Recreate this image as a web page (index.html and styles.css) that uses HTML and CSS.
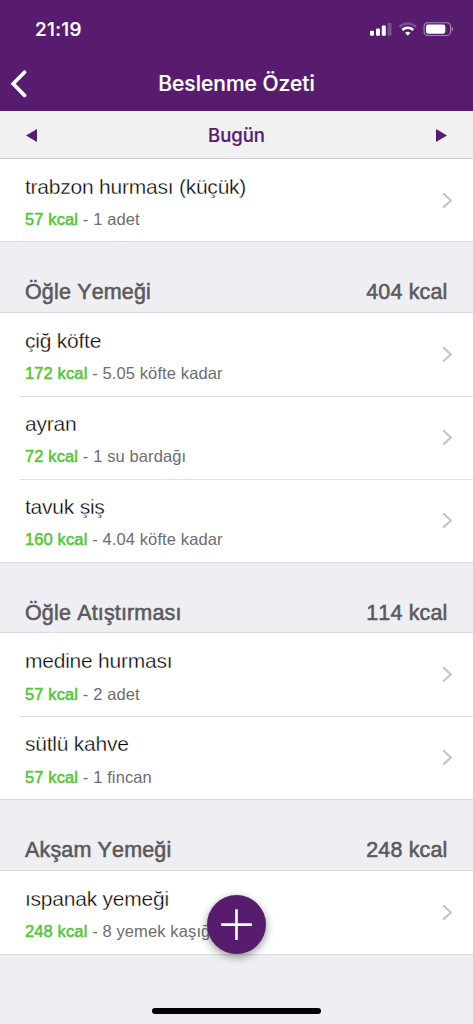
FILE: index.html
```
<!DOCTYPE html>
<html lang="tr">
<head>
<meta charset="utf-8">
<title>Beslenme Özeti</title>
<link rel="stylesheet" href="styles.css">
</head>
<body>
<div class="app">
  <header class="header">
    <div class="status">
      <span class="time">21:19</span>
      <svg class="status-icons" width="86" height="18" viewBox="0 0 86 18" fill="#fff">
        <rect x="0" y="10.8" width="4" height="5" rx="1"/>
        <rect x="6" y="8.4" width="4" height="7.4" rx="1"/>
        <rect x="11.8" y="5.4" width="4" height="10.4" rx="1"/>
        <rect x="17.6" y="3" width="4" height="12.8" rx="1" opacity=".22"/>
        <g fill="none" stroke="#fff" stroke-width="2.5">
          <path d="M29.5 6.9C34.3 2.4 41.3 2.4 46.1 6.9" opacity=".22"/>
          <path d="M32.3 10C35.5 7.1 40.1 7.1 43.3 10"/>
        </g>
        <path d="M37.8 15.7l-2.7-2.9c1.6-1.3 3.8-1.3 5.4 0z"/>
        <rect x="54.1" y="2.7" width="26.4" height="12.8" rx="3.6" fill="none" stroke="#fff" stroke-width="1.1" opacity=".48"/>
        <rect x="56" y="4.5" width="19.3" height="9.3" rx="2"/>
        <path d="M81.7 7c2 .8 2 3.6 0 4.4z" opacity=".5"/>
      </svg>
    </div>
    <div class="nav">
      <svg class="back" width="18" height="30" viewBox="0 0 18 30" fill="none" stroke="#fff" stroke-width="3.7" stroke-linecap="round" stroke-linejoin="miter"><path d="M15.5 3.2 4.2 14.8 15.5 26.4"/></svg>
      <h1 class="title">Beslenme Özeti</h1>
      <span></span>
    </div>
  </header>
  <div class="datebar">
    <svg width="11" height="13" viewBox="0 0 11 13"><path d="M11 0v13L0 6.5z" fill="#581c6e"/></svg>
    <span class="day">Bugün</span>
    <svg width="11" height="13" viewBox="0 0 11 13"><path d="M0 0v13l11-6.5z" fill="#581c6e"/></svg>
  </div>
  <main class="list">
    <div class="rows first">
      <div class="row"><div class="info"><div class="name">trabzon hurması (küçük)</div><div class="detail"><b>57 kcal</b> - 1 adet</div></div><svg class="chev" viewBox="0 0 11 17"><path d="M1.2 1.2 8.8 8.4 1.2 15.6"/></svg></div>
    </div>
    <h2 class="section"><span>Öğle Yemeği</span><span>404 kcal</span></h2>
    <div class="rows">
      <div class="row"><div class="info"><div class="name">çiğ köfte</div><div class="detail"><b>172 kcal</b> - 5.05 köfte kadar</div></div><svg class="chev" viewBox="0 0 11 17"><path d="M1.2 1.2 8.8 8.4 1.2 15.6"/></svg></div>
      <div class="row"><div class="info"><div class="name">ayran</div><div class="detail"><b>72 kcal</b> - 1 su bardağı</div></div><svg class="chev" viewBox="0 0 11 17"><path d="M1.2 1.2 8.8 8.4 1.2 15.6"/></svg></div>
      <div class="row"><div class="info"><div class="name">tavuk şiş</div><div class="detail"><b>160 kcal</b> - 4.04 köfte kadar</div></div><svg class="chev" viewBox="0 0 11 17"><path d="M1.2 1.2 8.8 8.4 1.2 15.6"/></svg></div>
    </div>
    <h2 class="section"><span>Öğle Atıştırması</span><span>114 kcal</span></h2>
    <div class="rows">
      <div class="row"><div class="info"><div class="name">medine hurması</div><div class="detail"><b>57 kcal</b> - 2 adet</div></div><svg class="chev" viewBox="0 0 11 17"><path d="M1.2 1.2 8.8 8.4 1.2 15.6"/></svg></div>
      <div class="row"><div class="info"><div class="name">sütlü kahve</div><div class="detail"><b>57 kcal</b> - 1 fincan</div></div><svg class="chev" viewBox="0 0 11 17"><path d="M1.2 1.2 8.8 8.4 1.2 15.6"/></svg></div>
    </div>
    <h2 class="section"><span>Akşam Yemeği</span><span>248 kcal</span></h2>
    <div class="rows last">
      <div class="row"><div class="info"><div class="name">ıspanak yemeği</div><div class="detail"><b>248 kcal</b> - 8 yemek kaşığ</div></div><svg class="chev" viewBox="0 0 11 17"><path d="M1.2 1.2 8.8 8.4 1.2 15.6"/></svg></div>
    </div>
  </main>
  <button class="fab" aria-label="Ekle"><svg width="32" height="32" viewBox="0 0 32 32" stroke="#fff" stroke-width="2.6"><path d="M15.5 .3v30.6M.2 15.6h30.6"/></svg></button>
  <div class="home"></div>
</div>
</body>
</html>
```
FILE: styles.css
```
* { box-sizing: border-box; }
body { margin: 0; }
.app {
  position: relative;
  width: 473px;
  height: 1024px;
  overflow: hidden;
  background: #efeef3;
  font-family: "Liberation Sans", Arial, sans-serif;
  font-kerning: none;
}
.header { height: 111px; background: #581c6e; color: #fff; }
.status {
  display: flex;
  justify-content: space-between;
  align-items: center;
  height: 58px;
  padding: 0 17px 0 35px;
}
.time {
  padding-top: 1px;
  font: 500 19px/22px Inter, sans-serif;
  letter-spacing: .3px;
  -webkit-text-stroke: .2px #fff;
}
.nav {
  display: grid;
  grid-template-columns: 60px 1fr 60px;
  align-items: center;
  height: 51px;
}
.back { margin-left: 9px; }
.title {
  margin: 0;
  text-align: center;
  font: 500 21px/26px Inter, sans-serif;
  -webkit-text-stroke: .2px #fff;
}
.datebar {
  display: flex;
  justify-content: space-between;
  align-items: center;
  height: 48px;
  padding: 1px 26px 0;
  background: #f1f1f1;
  border-bottom: 1px solid #c9c9cb;
}
.day { font: 500 18.5px/24px Inter, sans-serif; color: #581c6e; -webkit-text-stroke: .2px #581c6e; }
.rows { background: #fff; }
.row {
  display: flex;
  justify-content: space-between;
  align-items: center;
  height: 83px;
  margin-left: 20px;
  padding: 0 20px 0 5px;
}
.first .row { height: 82px; }
.last { border-bottom: 1px solid #dddce0; }
.row + .row { border-top: 1px solid #e0e0e2; padding-bottom: 1px; }
.name {
  margin-top: 3px;
  font-size: 21px;
  line-height: 26px;
  letter-spacing: -.23px;
  color: #000;
  -webkit-text-stroke: .35px #fff;
}
.detail {
  margin-top: 9.5px;
  font-size: 16.5px;
  line-height: 20px;
  letter-spacing: .12px;
  color: #6d6d6f;
}
.detail b {
  font-weight: 400;
  color: #56c63a;
  -webkit-text-stroke: .55px #56c63a;
}
.chev {
  width: 11px;
  height: 17px;
  fill: none;
  stroke: #c4c4c7;
  stroke-width: 2.1;
}
.section {
  display: flex;
  justify-content: space-between;
  height: 71.5px;
  margin: 0;
  padding: 37px 25.5px 0 25px;
  border: solid #dddce0;
  border-width: 1px 0;
  font-size: 21.5px;
  font-weight: 400;
  line-height: 26px;
  letter-spacing: .15px;
  color: #5a595d;
  -webkit-text-stroke: .55px #5a595d;
}
.fab {
  position: absolute;
  left: 207px;
  top: 895px;
  width: 59px;
  height: 59px;
  display: grid;
  place-items: center;
  padding: 0;
  border: 0;
  border-radius: 50%;
  background: #581c6e;
  box-shadow: 0 3px 9px rgba(0, 0, 0, .42);
}
.home {
  position: absolute;
  left: 152px;
  top: 1007.5px;
  width: 169px;
  height: 6px;
  border-radius: 3px;
  background: #000;
}
```
